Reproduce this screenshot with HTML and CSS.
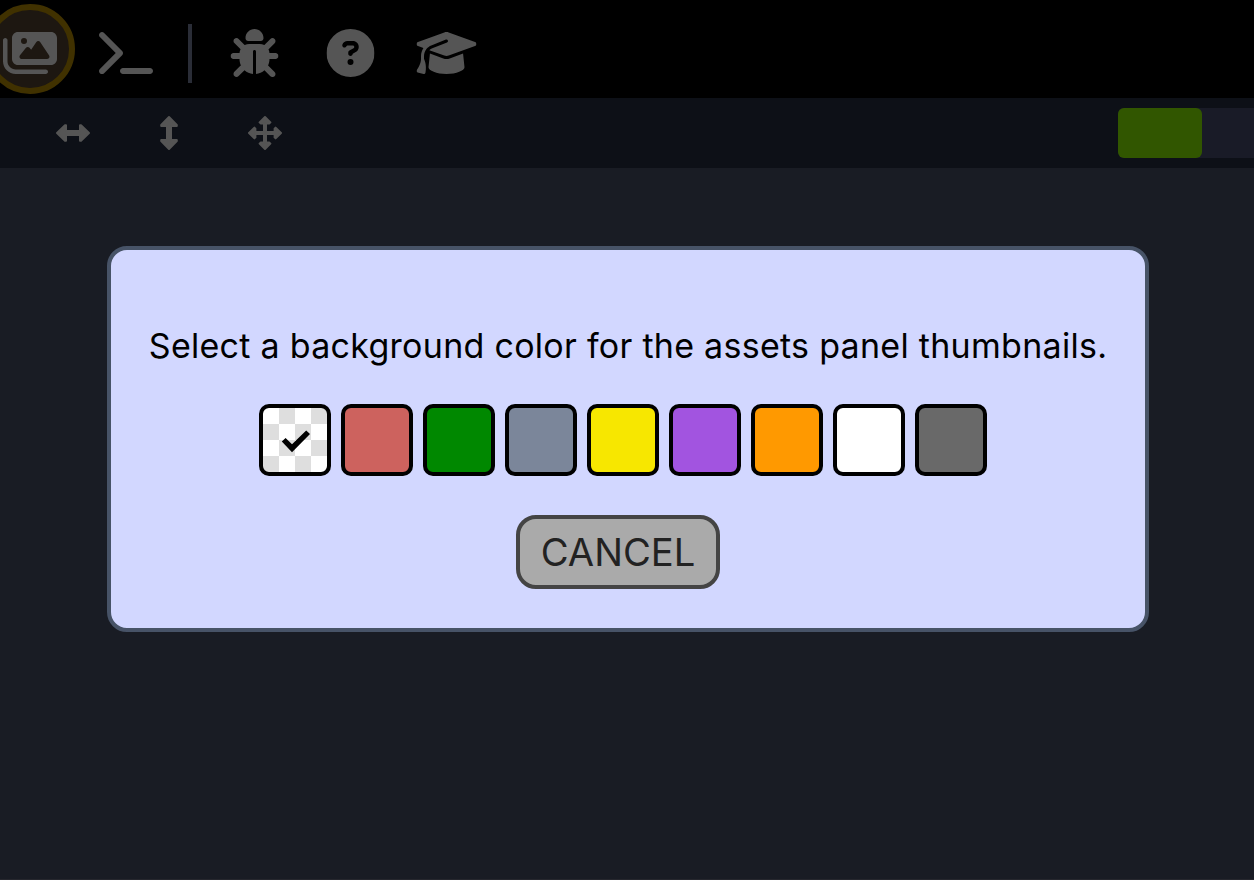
FILE: index.html
```html
<!DOCTYPE html>
<html lang="en">
<head>
<meta charset="utf-8">
<title>Assets panel</title>
<link rel="stylesheet" href="styles.css">
</head>
<body>
<header class="topbar">
  <div class="tool tool-active">
    <svg width="54" height="48" viewBox="0 0 576 512"><path d="M160 32c-35.3 0-64 28.7-64 64V320c0 35.3 28.7 64 64 64H512c35.3 0 64-28.7 64-64V96c0-35.3-28.7-64-64-64H160zM396 138.7l96 144c4.9 7.4 5.4 16.8 1.2 24.6S480.9 320 472 320H328 280 200c-9.2 0-17.6-5.3-21.6-13.6s-2.9-18.2 2.9-25.4l64-80c4.6-5.7 11.4-9 18.7-9s14.2 3.3 18.7 9l17.3 21.6 56-84C360.5 132 368 128 376 128s15.5 4 20 10.7zM192 128a32 32 0 1 1 64 0 32 32 0 1 1 -64 0zM48 120c0-13.3-10.7-24-24-24S0 106.7 0 120V344c0 75.1 60.9 136 136 136H456c13.3 0 24-10.7 24-24s-10.7-24-24-24H136c-48.6 0-88-39.4-88-88V120z"/></svg>
  </div>
  <svg class="tool console" width="54" height="48" viewBox="0 0 576 512"><path d="M9.4 86.6C-3.1 74.1-3.1 53.9 9.4 41.4s32.8-12.5 45.3 0l192 192c12.5 12.5 12.5 32.8 0 45.3l-192 192c-12.5 12.5-32.8 12.5-45.3 0s-12.5-32.8 0-45.3L178.7 256 9.4 86.6zM256 416H544c17.7 0 32 14.3 32 32s-14.3 32-32 32H256c-17.7 0-32-14.3-32-32s14.3-32 32-32z"/></svg>
  <span class="divider"></span>
  <svg class="tool bug" width="48" height="48" viewBox="0 0 512 512"><path d="M256 0c53 0 96 43 96 96v3.6c0 15.7-12.7 28.4-28.4 28.4H188.4c-15.7 0-28.4-12.7-28.4-28.4V96c0-53 43-96 96-96zM41.4 105.4c12.5-12.5 32.8-12.5 45.3 0l64 64c.7 .7 1.3 1.4 1.9 2.1c14.2-7.3 30.4-11.4 47.5-11.4H312c17.1 0 33.2 4.1 47.5 11.4c.6-.7 1.2-1.4 1.9-2.1l64-64c12.5-12.5 32.8-12.5 45.3 0s12.5 32.8 0 45.3l-64 64c-.7 .7-1.4 1.3-2.1 1.9c6.2 12 10.1 25.3 11.1 39.5H480c17.7 0 32 14.3 32 32s-14.3 32-32 32H416c0 24.6-5.5 47.8-15.4 68.6c2.2 1.3 4.2 2.9 6 4.8l64 64c12.5 12.5 12.5 32.8 0 45.3s-32.8 12.5-45.3 0l-63.1-63.1c-24.5 21.8-55.8 36.2-90.3 39.6V240c0-8.8-7.2-16-16-16s-16 7.2-16 16V479.2c-34.5-3.4-65.8-17.8-90.3-39.6L86.6 502.6c-12.5 12.5-32.8 12.5-45.3 0s-12.5-32.8 0-45.3l64-64c1.9-1.9 3.9-3.4 6-4.8C101.5 367.8 96 344.6 96 320H32c-17.7 0-32-14.3-32-32s14.3-32 32-32H96.3c1.1-14.1 5-27.5 11.1-39.5c-.7-.6-1.4-1.2-2.1-1.9l-64-64c-12.5-12.5-12.5-32.8 0-45.3z"/></svg>
  <svg class="tool help" width="48" height="48" viewBox="0 0 512 512"><path d="M256 512A256 256 0 1 0 256 0a256 256 0 1 0 0 512zM169.8 165.3c7.9-22.3 29.1-37.3 52.8-37.3h58.3c34.9 0 63.1 28.3 63.1 63.1c0 22.6-12.1 43.5-31.7 54.8L280 264.4c-.2 13-10.9 23.6-24 23.6c-13.3 0-24-10.7-24-24V250.5c0-8.6 4.6-16.5 12.1-20.8l44.3-25.4c4.7-2.7 7.6-7.7 7.6-13.1c0-8.4-6.8-15.1-15.1-15.1H222.6c-3.4 0-6.4 2.1-7.5 5.3l-.4 1.2c-4.4 12.5-18.2 19-30.6 14.6s-19-18.2-14.6-30.6l.4-1.2zM224 352a32 32 0 1 1 64 0 32 32 0 1 1 -64 0z"/></svg>
  <svg class="tool learn" width="60" height="48" viewBox="0 0 640 512"><path d="M320 32c-8.1 0-16.1 1.4-23.7 4.1L15.8 137.4C6.3 140.9 0 149.9 0 160s6.3 19.1 15.8 22.6l57.9 20.9C57.3 229.3 48 259.8 48 291.9v28.1c0 28.4-10.8 57.7-22.3 80.8c-6.5 13-13.9 25.8-22.5 37.6C0 442.7-.9 448.3 .9 453.4s6 8.9 11.2 10.2l64 16c4.2 1.1 8.7 .3 12.4-2s6.3-6.1 7.1-10.4c8.6-42.8 4.3-81.2-2.1-108.7C90.3 344.3 86 329.8 80 316.5V291.9c0-30.2 10.2-58.7 27.9-81.5c12.9-15.5 29.6-28 49.2-35.7l157-61.7c8.2-3.2 17.5 .8 20.7 9s-.8 17.5-9 20.7l-157 61.7c-12.4 4.9-23.3 12.4-32.2 21.6l159.6 57.6c7.6 2.7 15.6 4.1 23.7 4.1s16.1-1.4 23.7-4.1L624.2 182.6c9.5-3.4 15.8-12.5 15.8-22.6s-6.3-19.1-15.8-22.6L343.7 36.1C336.1 33.4 328.1 32 320 32zM128 408c0 35.3 86 72 192 72s192-36.7 192-72L496.7 262.6 354.5 314c-11.1 4-22.8 6-34.5 6s-23.5-2-34.5-6L143.3 262.6 128 408z"/></svg>
</header>
<nav class="subbar">
  <div class="arrows">
    <svg class="arrow" width="36" height="36" viewBox="-18 -18 36 36"><path d="M-16 0L-8 -7.8H-7V-2H7V-7.8H8L16 0L8 7.8H7V2H-7V7.8H-8Z"/></svg>
    <svg class="arrow" width="36" height="36" viewBox="-18 -18 36 36"><path transform="rotate(90)" d="M-16 0L-8 -7.8H-7V-2H7V-7.8H8L16 0L8 7.8H7V2H-7V7.8H-8Z"/></svg>
    <svg class="arrow" width="36" height="36" viewBox="-18 -18 36 36"><path d="M0 -16L5.4 -10.6L4.4 -9.6H1V-1H9.6V-4.4L10.6 -5.4L16 0L10.6 5.4L9.6 4.4V1H1V9.6H4.4L5.4 10.6L0 16L-5.4 10.6L-4.4 9.6H-1V1H-9.6V4.4L-10.6 5.4L-16 0L-10.6 -5.4L-9.6 -4.4V-1H-1V-9.6H-4.4L-5.4 -10.6Z"/></svg>
  </div>
  <div class="meter"><span class="meter-fill"></span></div>
</nav>
<main class="stage">
  <section class="dialog">
    <p class="prompt">Select a background color for the assets panel thumbnails.</p>
    <div class="swatches">
      <span class="swatch checker"><svg width="64" height="64" viewBox="0 0 64 64"><path d="M18.8 33.6L22.6 30L29 36.2L43.2 22.4L47 26L29 44.2Z"/></svg></span>
      <span class="swatch red"></span>
      <span class="swatch green"></span>
      <span class="swatch slate"></span>
      <span class="swatch yellow"></span>
      <span class="swatch purple"></span>
      <span class="swatch orange"></span>
      <span class="swatch white"></span>
      <span class="swatch gray"></span>
    </div>
    <button class="cancel">CANCEL</button>
  </section>
</main>
</body>
</html>
```

FILE: styles.css
```css
* { box-sizing: border-box; }
body {
  margin: 0;
  width: 1254px;
  height: 880px;
  overflow: hidden;
  display: flex;
  flex-direction: column;
  background: #191c24;
  font-family: Inter, "Liberation Sans", sans-serif;
}
svg { display: block; }
.topbar {
  flex: none;
  height: 98px;
  display: flex;
  align-items: flex-start;
  background: #000;
}
.tool {
  flex: none;
  margin-top: 29px;
  fill: #555;
}
.tool-active {
  width: 90px;
  height: 90px;
  margin: 4px 0 0 -15px;
  padding: 19px 0 0 12px;
  border: 6px solid #403100;
  border-radius: 50%;
  background: #1d1711;
}
.console { margin-left: 24px; }
.divider {
  width: 4px;
  height: 59px;
  margin: 24px 0 0 35px;
  background: #2a2d37;
}
.bug { margin-left: 38px; }
.help { margin-left: 48px; }
.learn { margin-left: 42px; }
.bug, .help, .learn { transform: translateX(0.5px); }
.subbar {
  flex: none;
  height: 70px;
  display: flex;
  align-items: center;
  justify-content: space-between;
  padding-left: 55px;
  background: #0d1017;
}
.arrows { display: flex; gap: 60px; }
.arrow path {
  fill: #555;
  stroke: #555;
  stroke-width: 2;
  stroke-linejoin: round;
}
.meter {
  width: 136px;
  height: 50px;
  border-radius: 6px 0 0 6px;
  background: #191b27;
}
.meter-fill {
  display: block;
  width: 84px;
  height: 50px;
  border-radius: 6px;
  background: #315600;
}
.stage {
  flex: 1;
  padding: 78px 0 0 107px;
  border-bottom: 1px solid #26272e;
}
.dialog {
  width: 1042px;
  height: 386px;
  display: flex;
  flex-direction: column;
  align-items: center;
  padding-top: 74px;
  border: 4px solid #475367;
  border-radius: 20px;
  background: #d2d7ff;
}
.prompt {
  margin: 0;
  color: #000;
  font-size: 34px;
  letter-spacing: 0.28px;
  line-height: 44px;
  white-space: nowrap;
}
.swatches {
  display: flex;
  gap: 10px;
  margin: 36px 10px 0 0;
}
.swatch {
  width: 72px;
  height: 72px;
  border: 4px solid #000;
  border-radius: 10px;
}
.checker {
  background: repeating-conic-gradient(#dedede 0 25%, #fff 0 50%) 0 0 / 32px 32px;
}
.red { background: #cd625e; }
.green { background: #008800; }
.slate { background: #7b869a; }
.yellow { background: #f7e700; }
.purple { background: #a254e0; }
.orange { background: #ff9900; }
.white { background: #fff; }
.gray { background: #696969; }
.cancel {
  width: 204px;
  height: 74px;
  margin: 39px 20px 0 0;
  padding: 0;
  border: 4px solid #444;
  border-radius: 20px;
  background: #aaa;
  color: #222;
  font-family: inherit;
  font-size: 38.2px;
  line-height: 66px;
}
```
